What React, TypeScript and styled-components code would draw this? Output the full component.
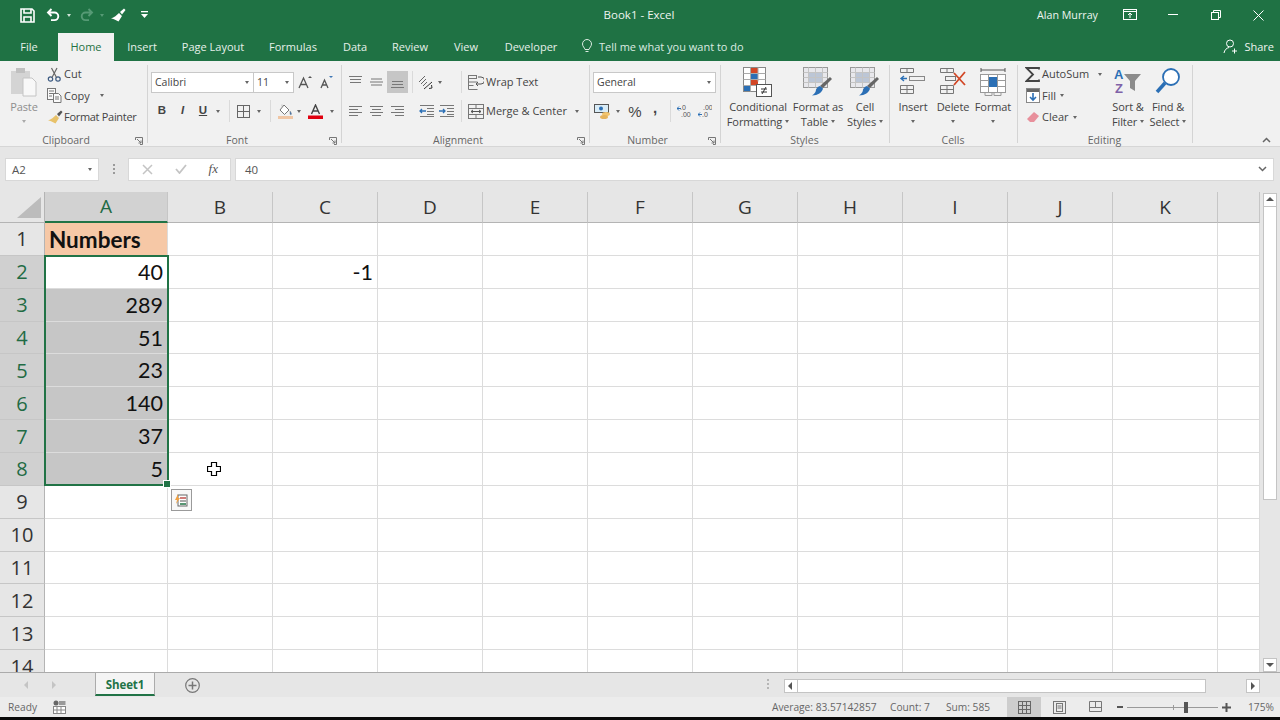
import React from 'react';
import styled, { createGlobalStyle } from 'styled-components';

const Global = createGlobalStyle`
  html, body { margin: 0; padding: 0; background: #e6e6e6; }
  body { font-family: "Open Sans", "Noto Sans", sans-serif; }
  svg { display: block; flex-shrink: 0; }
`;
const Win = styled.div`
  width: 1280px; height: 720px; overflow: hidden; display: flex; flex-direction: column;
  background: #e6e6e6; position: relative;
`;
const TitleBar = styled.div`
  height: 30px; flex: none; background: #1f7244; color: #fff; display: grid;
  grid-template-columns: 1fr auto 1fr; align-items: center;
`;
const Quick = styled.div`display: flex; align-items: center; padding-left: 10px;`;
const Slot = styled.div<{ $w: number; $active?: boolean }>`
  width: ${p => p.$w}px; height: 22px; flex: none; display: flex; align-items: center; justify-content: center;
  background: ${p => (p.$active ? '#c6c6c6' : 'transparent')};
`;
const Caret = styled.span<{ $c?: string }>`
  display: block; width: 0; height: 0; flex: none;
  border-left: 2.5px solid transparent; border-right: 2.5px solid transparent;
  border-top: 3px solid ${p => p.$c ?? '#666'};
`;
const TitleText = styled.div`font-size: 11.5px; color: #eef5f0; margin-top: -1px; margin-left: -2px;`;
const TitleRight = styled.div`display: flex; align-items: center; justify-content: flex-end; font-size: 10.7px;`;
const UserName = styled.span`width: 62px; margin-right: 9px; white-space: nowrap; color: #eef5f0; margin-top: -1px;`;
const WinBtn = styled.div`width: 43px; display: flex; justify-content: center;`;

const TabBar = styled.div`
  height: 31px; flex: none; background: #1f7244; display: flex; align-items: flex-end; font-size: 11px; color: #e6f0ea;
`;
const Tab = styled.div<{ $w: number; $on?: boolean }>`
  width: ${p => p.$w}px; height: 28px; display: flex; align-items: center; justify-content: center;
  padding-bottom: 2px; box-sizing: border-box;
  background: ${p => (p.$on ? '#f1f1f1' : 'transparent')}; color: ${p => (p.$on ? '#1f7244' : '#e6f0ea')};
`;
const TellMe = styled.div`
  height: 28px; display: flex; align-items: center; gap: 6px; margin-left: 11px; padding-bottom: 2px; box-sizing: border-box; color: #dcebe2;
`;
const Share = styled.div`
  margin-left: auto; height: 28px; display: flex; align-items: center; gap: 6px; padding: 0 6px 2px 0; box-sizing: border-box; color: #eef5f0;
`;

const Ribbon = styled.div`
  height: 86px; flex: none; background: #f1f1f1; border-bottom: 1px solid #d6d6d6; box-sizing: border-box;
  display: flex; align-items: flex-start; font-size: 11px; color: #444; position: relative;
`;
const Group = styled.div<{ $w: number }>`
  width: ${p => p.$w}px; height: 78px; margin-top: 4px; flex: none; box-sizing: border-box;
  border-right: 1px solid #d4d4d4; display: flex; flex-direction: column; padding-top: 6px;
`;
const Body = styled.div<{ $pl?: number }>`
  height: 60px; flex: none; display: flex; padding-left: ${p => p.$pl ?? 0}px; box-sizing: border-box;
`;
const Stack = styled.div<{ $pl?: number }>`
  height: 60px; flex: none; display: flex; flex-direction: column; gap: 7px; padding-left: ${p => p.$pl ?? 0}px;
`;
const Row = styled.div<{ $ml?: number }>`
  display: flex; align-items: center; height: 22px; white-space: nowrap; margin-left: ${p => p.$ml ?? 0}px;
`;
const GroupLabel = styled.div<{ $pr?: number }>`
  height: 18px; line-height: 18px; text-align: center; font-size: 10.5px; color: #666; position: relative;
  padding-right: ${p => p.$pr ?? 1}px;
`;
const Launcher = styled.span`position: absolute; right: 4px; top: 6px;`;
const Combo = styled.div<{ $w: number }>`
  width: ${p => p.$w}px; height: 21px; flex: none; box-sizing: border-box; background: #fff; border: 1px solid #c8c8c8;
  display: flex; align-items: center; justify-content: space-between; padding: 0 4px 0 3px; font-size: 10.5px; color: #444; margin-left: -1px;
`;
const Sep = styled.div`width: 1px; height: 22px; background: #dadada;`;
const Large = styled.div<{ $w: number; $dim?: boolean }>`
  width: ${p => p.$w}px; flex: none; display: flex; flex-direction: column; align-items: center; margin-top: -4px;
  color: ${p => (p.$dim ? '#8e8e8e' : '#444')};
`;
const LargeIcon = styled.div`height: 32px; display: flex; align-items: flex-start; justify-content: center;`;
const Line = styled.div`
  height: 15px; line-height: 15px; white-space: nowrap; display: flex; align-items: center; justify-content: center; gap: 3px; letter-spacing: -0.1px;
`;
const SmallCol = styled.div<{ $w: number; $pl?: number }>`
  width: ${p => p.$w}px; flex: none; display: flex; flex-direction: column; margin-top: -7.5px; padding-left: ${p => p.$pl ?? 0}px; box-sizing: border-box;
`;
const SmallRow = styled.div`height: 21.5px; display: flex; align-items: center; white-space: nowrap;`;
const SmallIcon = styled.span`width: 17px; margin-right: 1px; display: flex; justify-content: center; flex: none;`;
const SmallText = styled.span<{ $w?: number; $tight?: boolean }>`
  display: inline-block; margin-bottom: 1px; ${p => (p.$w ? `width:${p.$w}px;` : 'margin-right: 4px;')}
  letter-spacing: ${p => (p.$tight ? '-0.3px' : '0')};
`;
const CollapseBtn = styled.span`position: absolute; right: 9px; bottom: 3px;`;

const FormulaRow = styled.div`
  height: 45px; flex: none; display: flex; align-items: center; background: #e6e6e6; padding-bottom: 1px; box-sizing: border-box;
  font-size: 11.5px; color: #555;
`;
const FBox = styled.div<{ $w?: number; $ml: number }>`
  ${p => (p.$w ? `width:${p.$w}px; flex:none;` : 'flex:1;')} margin-left: ${p => p.$ml}px; height: 23px; box-sizing: border-box;
  background: #fff; border: 1px solid #d8d8d8; display: flex; align-items: center; justify-content: space-between; padding: 0 6px;
`;
const FormulaEnd = styled.div`width: 6px; flex: none;`;
const Dots = styled.span`
  width: 2px; height: 10px; margin-left: 14px; flex:none;
  background: repeating-linear-gradient(#9a9a9a 0 2px, transparent 2px 4px);
`;
const FxSlot = styled.span<{ $ml?: number; $mr?: number }>`
  display: flex; margin-left: ${p => p.$ml ?? 0}px; margin-right: ${p => p.$mr ?? 0}px;
`;

const Main = styled.div`height: 480px; flex: none; display: flex; background: #e6e6e6;`;
const SheetWrap = styled.div`width: 1260px; height: 480px; flex: none; position: relative; overflow: hidden; background: #fff;`;
const Grid = styled.div`
  display: grid; grid-template-columns: 45px 123px repeat(10, 105px) 42px; grid-auto-rows: 32.86px; grid-template-rows: 31px;
`;
const Corner = styled.div`
  background: #e6e6e6; border-right: 1px solid #b4b4b4; border-bottom: 1px solid #b4b4b4; display: flex; align-items: flex-end; justify-content: flex-end; padding: 0 3px 4px 0;
`;
const ColHead = styled.div<{ $on?: boolean }>`
  background: ${p => (p.$on ? '#d2d2d2' : '#e6e6e6')}; color: ${p => (p.$on ? '#1f6b44' : '#333')};
  border-right: 1px solid #c6c6c6; border-bottom: ${p => (p.$on ? '2px solid #217346' : '1px solid #b4b4b4')};
  display: flex; align-items: center; justify-content: center; font-size: 19px; box-sizing: border-box; padding-bottom: 1px;
`;
const RowHead = styled.div<{ $on?: boolean }>`
  background: ${p => (p.$on ? '#d0d0d0' : '#e6e6e6')}; color: ${p => (p.$on ? '#1f6b44' : '#333')};
  border-right: 1px solid #b4b4b4; border-bottom: 1px solid #c6c6c6; box-sizing: border-box;
  display: flex; align-items: center; justify-content: center; font-size: 20px;
`;
const Cell = styled.div<{ $bg?: string; $bold?: boolean; $left?: boolean }>`
  background: ${p => p.$bg ?? '#fff'}; border-right: 1px solid #dcdcdc; border-bottom: 1px solid #dcdcdc; box-sizing: border-box;
  display: flex; align-items: center; justify-content: ${p => (p.$left ? 'flex-start' : 'flex-end')};
  padding: ${p => (p.$bold ? '1px 4px 0' : '0 4px')}; font-family: Lato, "Open Sans", sans-serif; color: #111;
  font-size: ${p => (p.$bold ? 22.5 : 21.5)}px; font-weight: ${p => (p.$bold ? 700 : 400)};
`;
const Selection = styled.div`
  position: absolute; left: 44px; top: 63px; width: 125px; height: 231px; box-sizing: border-box; border: 2px solid #217346; pointer-events: none;
`;
const Handle = styled.div`
  position: absolute; right: -4px; bottom: -4px; width: 6px; height: 6px; background: #217346; border: 1px solid #fff;
`;
const QuickAnalysis = styled.div`
  position: absolute; left: 171px; top: 297px; width: 21px; height: 22px; box-sizing: border-box; border: 1px solid #9a9a9a; background: #f8f8f8;
  display: flex; align-items: center; justify-content: center;
`;
const Pointer = styled.div`position: absolute; left: 207px; top: 270px;`;
const VScroll = styled.div`
  width: 14px; height: 480px; margin-left: 3px; flex: none; display: flex; flex-direction: column; padding-top: 1px; box-sizing: border-box;
`;
const ScrollBtn = styled.div<{ $w?: number; $h?: number }>`
  width: ${p => p.$w ?? 14}px; height: ${p => p.$h ?? 14}px; flex: none; background: #fff; border: 1px solid #c4c4c4; box-sizing: border-box;
  display: flex; align-items: center; justify-content: center;
`;
const VThumb = styled.div`height: 293px; flex: none; background: #fff; border: 1px solid #c4c4c4; border-top: none; box-sizing: border-box;`;
const Track = styled.div`flex: 1;`;
const SheetBar = styled.div`
  height: 25px; flex: none; background: #e6e6e6; border-top: 1px solid #ababab; box-sizing: border-box; display: flex; align-items: flex-start; position: relative;
`;
const NavArrows = styled.div`width: 95px; height: 24px; flex: none; display: flex; align-items: center; padding-left: 23px; gap: 19px; box-sizing: border-box;`;
const SheetTab = styled.div`
  width: 60px; height: 23px; flex: none; box-sizing: border-box; padding-top: 2px; background: #f4f4f4; border-left: 1px solid #ababab; border-right: 1px solid #ababab; border-bottom: 2px solid #217346;
  color: #217346; font-weight: 700; font-size: 11.5px; display: flex; align-items: center; justify-content: center; letter-spacing: -0.1px;
`;
const AddSheet = styled.div`margin-left: 30px; height: 24px; display: flex; align-items: center;`;
const BarDots = styled.div`
  margin-left: auto; width: 2px; height: 10px; margin-top: 6px; flex: none;
  background: repeating-linear-gradient(#b5b5b5 0 2px, transparent 2px 4px);
`;
const HScroll = styled.div`
  width: 476px; height: 14px; margin: 6px 20px 0 15px; flex: none; display: flex;
`;
const HThumb = styled.div`width: 408px; height: 14px; background: #fff; border: 1px solid #c4c4c4; border-left: none; box-sizing: border-box; flex: none;`;
const Status = styled.div`
  height: 20px; flex: none; background: #ececec; display: flex; align-items: center; font-size: 10.2px; color: #666; box-sizing: border-box;
`;
const Ready = styled.span`margin-left: 8px; width: 45px; flex: none;`;
const StatusItem = styled.span<{ $w: number }>`width: ${p => p.$w}px; flex: none; white-space: nowrap;`;
const StatusPush = styled.div`flex: 1;`;
const ViewBtn = styled.div<{ $w: number; $on?: boolean }>`
  width: ${p => p.$w}px; height: 20px; flex: none; display: flex; align-items: center; justify-content: center; background: ${p => (p.$on ? '#cdcdcd' : 'transparent')};
`;
const Zoomer = styled.div`width: 114px; flex: none; margin-left: 4px; height: 19px; display: flex; align-items: center; justify-content: space-between; position: relative;`;
const ZoomTrack = styled.div`
  flex: 1; height: 1px; background: #9a9a9a; margin: 0 4px; position: relative;
  &::after { content: ''; position: absolute; left: 46px; top: -2px; width: 1px; height: 5px; background: #9a9a9a; }
`;
const ZoomThumb = styled.div`position: absolute; left: 57px; top: -5px; width: 4px; height: 11px; background: #555;`;
const ZoomText = styled.span`width: 24px; margin-left: 17px; margin-right: 8px; flex: none; white-space: nowrap; font-size: 10.2px;`;
const Black = styled.div`flex: 1; background: #0a0a0a;`;

const Launch = () => (
  <svg width="8" height="8" viewBox="0 0 8 8" fill="none" stroke="#777"><path d="M.5 3V.5H7.5V7.5H5" /><path d="M2 2l4 4M6 3.5V6H3.5" /></svg>
);
const Save = () => (
  <svg width="15" height="15" viewBox="0 0 15 15" fill="none" stroke="#fff" strokeWidth="1.6"><path d="M1 1h11l2 2v11H1z" /><path d="M4 1v4h7V1M4 14V9h7v5" /></svg>
);
const Undo = ({ c = '#fff' }: { c?: string }) => (
  <svg width="14" height="14" viewBox="0 0 14 14" fill="none" stroke={c} strokeWidth="1.9"><path d="M5.5 1L2 4.5 5.5 8M2 4.5h6.5a3.8 3.8 0 0 1 0 7.6H5" /></svg>
);
const Brush = ({ c = '#fff', h = '#fff' }: { c?: string; h?: string }) => (
  <svg width="16" height="14" viewBox="0 0 16 14"><path d="M9 5l3 3-3.5 5.5C6 12 3 10.5 1 10.5 4 9.5 7 7 9 5z" fill={c} /><path d="M10 4l4-3.5 1.5 1.5-3.5 4.5z" fill={h} /></svg>
);
const Customize = () => (
  <svg width="7" height="8" viewBox="0 0 7 8" fill="#fff"><rect y="0" width="7" height="1.3" /><path d="M0 3h7L3.5 7z" /></svg>
);
const Display = () => (
  <svg width="14" height="12" viewBox="0 0 14 12" fill="none" stroke="#fff"><rect x=".5" y=".5" width="13" height="10" /><path d="M.5 2.5h13M7 9V4M5 6l2-2 2 2" /></svg>
);
const Min = () => <svg width="10" height="2" viewBox="0 0 10 2"><rect width="10" height="1" fill="#fff" /></svg>;
const Restore = () => (
  <svg width="10" height="10" viewBox="0 0 10 10" fill="none" stroke="#fff"><rect x=".5" y="2.5" width="7" height="7" /><path d="M2.5 2.5v-2h7v7h-2" /></svg>
);
const Close = () => <svg width="11" height="11" viewBox="0 0 11 11" stroke="#fff"><path d="M.5.5l10 10M10.5.5l-10 10" /></svg>;
const Bulb = () => (
  <svg width="12" height="15" viewBox="0 0 12 15" fill="none" stroke="#dcebe2"><path d="M4 10.5C3.5 8.5 1.5 7.5 1.5 5a4.5 4.5 0 0 1 9 0C10.5 7.5 8.5 8.5 8 10.5z" /><path d="M4.5 12.5h3" /></svg>
);
const Person = () => (
  <svg width="15" height="15" viewBox="0 0 15 15" fill="none" stroke="#fff"><circle cx="7" cy="4.5" r="3.5" /><path d="M1 14c.5-3 2.5-5 5-5.500M11.500 9.500v5M9 12h5" /></svg>
);
const PasteIcon = () => (
  <svg width="28" height="30" viewBox="0 0 28 30"><rect x="1" y="4" width="19" height="23" fill="#d4d4d4" /><rect x="6" y="1" width="9" height="5" fill="#c0c0c0" /><path d="M13 11h9l4 4v14H13z" fill="#f8f8f8" stroke="#c4c4c4" /></svg>
);
const Scissors = () => (
  <svg width="15" height="15" viewBox="0 0 15 15" fill="none" stroke="#3c5a82" strokeWidth="1.2"><circle cx="3.5" cy="12" r="2.2" /><circle cx="11" cy="12" r="2.2" /><path d="M5 10.5L10 1M9.5 10.5L4.5 1" stroke="#666" /></svg>
);
const CopyIcon = () => (
  <svg width="15" height="15" viewBox="0 0 15 15" fill="#fafafa" stroke="#777"><rect x=".5" y=".5" width="8" height="11" /><path d="M2 3h5M2 5.5h5M2 8h3" /><path d="M6.5 5.5h5L14 8v6.5H6.500z" /><path d="M8 9h4M8 11h4" /></svg>
);
const BoldL = styled.span<{ $b?: boolean; $i?: boolean; $u?: boolean; $s?: number; $light?: boolean; $mb?: number }>`
  font-weight: ${p => (p.$light ? 400 : p.$b ? 700 : 600)}; font-style: ${p => (p.$i ? 'italic' : 'normal')};
  text-decoration: ${p => (p.$u ? 'underline' : 'none')}; font-size: ${p => p.$s ?? 11.5}px; color: #444; line-height: 1;
  font-family: "Liberation Sans", sans-serif; margin-bottom: ${p => p.$mb ?? 0}px;
`;
const GrowA = ({ up }: { up: boolean }) => (
  <svg width="15" height="15" viewBox="0 0 15 15"><path d={up ? 'M1 13L5.5 3 10 13M3 9.5h5' : 'M2 13L5.5 5 9 13M3.5 10h4'} fill="none" stroke="#555" strokeWidth="1.3" /><path d={up ? 'M10 3l2-2 2 2z' : 'M10 1h4l-2 2z'} fill={up ? '#555' : '#3f77b5'} /></svg>
);
const Borders = () => (
  <svg width="13" height="13" viewBox="0 0 13 13" fill="none" stroke="#666"><rect x=".5" y=".5" width="12" height="12" /><path d="M6.5.5v12M.5 6.5h12" /></svg>
);
const Fill = () => (
  <svg width="17" height="15" viewBox="0 0 17 15"><path d="M7 1l5 5-4.500 4.500L3 6z" fill="#fff" stroke="#777" /><path d="M5 2.500v-2M13 7c1 1.500 1.500 2 1.500 3s-1.500 1-1.500 0z" fill="#3f77b5" stroke="#777" strokeWidth=".4" /><rect x="1" y="12" width="15" height="3" fill="#f0c6a4" /></svg>
);
const FontColor = () => (
  <svg width="15" height="15" viewBox="0 0 15 15"><path d="M3.5 10L7.5 1l4 9M5 7h5" fill="none" stroke="#444" strokeWidth="1.4" /><rect y="11.5" width="15" height="3.5" fill="#e0000f" /></svg>
);
const Lines = ({ kind }: { kind: string }) => {
  const d: Record<string, string> = {
    top: 'M1 1.5h13M2 4.5h11M2 7.5h11',
    mid: 'M2 4h11M1 7h13M2 10h11',
    bot: 'M2 6.5h11M2 9.5h11M1 12.5h13',
    left: 'M1 2.5h13M1 5.5h9M1 8.5h13M1 11.5h9',
    center: 'M1 2.5h13M3 5.5h9M1 8.5h13M3 11.5h9',
    right: 'M1 2.5h13M5 5.5h9M1 8.5h13M5 11.5h9',
  };
  return <svg width="15" height="14" viewBox="0 0 15 14" fill="none" stroke="#777"><path d={d[kind]} /></svg>;
};
const Orient = () => (
  <svg width="16" height="15" viewBox="0 0 16 15" fill="none" stroke="#666"><path d="M1 7l6-6M3 9l5-5M5 11l4-4" /><path d="M6 14l8-7" stroke="#333" /><path d="M11 13.5l3-.5-.5-3" stroke="#333" /></svg>
);
const Indent = ({ inc }: { inc?: boolean }) => (
  <svg width="15" height="12" viewBox="0 0 15 12" fill="none" stroke="#777"><path d="M1 .5h14M8 3.5h7M8 6.5h7M8 9.5h7M1 11.5h14" /><path d={inc ? 'M0 6h6M4 4l2 2-2 2' : 'M1 6h6M3 4L1 6l2 2'} stroke="#2b6fb5" strokeWidth="1.3" /></svg>
);
const Wrap = () => (
  <svg width="16" height="15" viewBox="0 0 16 15" fill="none" stroke="#777"><rect x=".5" y=".5" width="8" height="3" /><path d="M.5 3.5v11h9M.5 7h9M.5 10.5h5" /><path d="M10 2h3a2 2 0 0 1 0 7H9" stroke="#555" /><path d="M10 7l-2 2 2 2" stroke="#555" /></svg>
);
const Merge = () => (
  <svg width="16" height="15" viewBox="0 0 16 15" fill="none" stroke="#777"><rect x=".5" y=".5" width="15" height="14" /><path d="M.5 4.5h15M.5 10.5h15M8 .5v4M8 10.5v4" /><path d="M3 7.5h10M5 6L3 7.5 5 9M11 6l2 1.5L11 9" stroke="#555" /></svg>
);
const Currency = () => (
  <svg width="18" height="16" viewBox="0 0 18 16"><rect x=".5" y="1.5" width="14" height="8" fill="#d9ecf7" stroke="#555" /><circle cx="7" cy="5.5" r="2" fill="#2b6fb5" /><ellipse cx="12" cy="11" rx="4" ry="2" fill="#f2c46d" /><ellipse cx="10" cy="14" rx="4" ry="2" fill="#e5b35c" /></svg>
);
const DecIcon = ({ inc }: { inc?: boolean }) => (
  <svg width="14" height="14" viewBox="0 0 14 14"><text x={inc ? 5 : 3} y="6" fontSize="7" fill="#555" fontFamily="Liberation Sans">{inc ? '.00' : '.0'}</text><text x="4" y="13" fontSize="7" fill="#555" fontFamily="Liberation Sans">{inc ? '.0' : '.00'}</text><path d="M0 4.5h4M2 2.5l-2 2 2 2" fill="none" stroke="#2b6fb5" transform={inc ? 'translate(0 6)' : ''} /></svg>
);
const CondFormat = () => (
  <svg width="30" height="30" viewBox="0 0 30 30"><rect x=".5" y=".5" width="22" height="24" fill="#fff" stroke="#888" /><rect x="7" y="1" width="8" height="5" fill="#d24726" /><rect x="7" y="7" width="8" height="5" fill="#2b6fb5" /><rect x="7" y="13" width="8" height="5" fill="#d24726" /><rect x="1" y="19" width="7" height="5" fill="#2b6fb5" /><path d="M7.5.5v24M15 .5v14M.5 6.5h22M.5 12.5h22M.5 18.5h14" stroke="#aaa" fill="none" /><rect x="13.5" y="17.5" width="15" height="12" fill="#fff" stroke="#555" /><path d="M18 22h6M18 25h6M23 20l-4 7" stroke="#333" fill="none" /></svg>
);
const TableBrush = () => (
  <svg width="30" height="30" viewBox="0 0 30 30"><rect x=".5" y=".5" width="24" height="20" fill="#e8e8ec" stroke="#999" /><rect x="5" y="6" width="15" height="10" fill="#bcc6d6" /><path d="M.5 5.5h24M.5 10.5h24M.5 15.5h24M5.5.5v20M12.5.5v20M19.5.5v20" stroke="#c4c4c4" fill="none" /><path d="M27 10l2 2-9 9-3-2z" fill="#666" /><path d="M17 19l3 2.5c-1 4-5 7-11 7 3-2 4-4 4-6 1-2 2-3 4-3.500z" fill="#2b6fb5" /></svg>
);
const Cells = ({ kind }: { kind: string }) => (
  <svg width="28" height="28" viewBox="0 0 28 28" fill="none" stroke="#777">
    <path d="M1.5 1.5h13v4h-13zM8 1.5v4M1.5 18.5h13v8h-13zM1.5 22.5h13M8 18.5v8" />
    {kind === 'ins' ? (
      <>
        <rect x="10.5" y="9.5" width="15" height="4" stroke="#888" />
        <path d="M2 11.5h6M5 9l-3 2.5L5 14" stroke="#2b6fb5" strokeWidth="1.4" />
      </>
    ) : (
      <>
        <rect x="6.5" y="9.5" width="10" height="4" />
        <path d="M15 6l11 12M26 5L15 18" stroke="#d24726" strokeWidth="1.8" />
      </>
    )}
  </svg>
);
const FormatCells = () => (
  <svg width="28" height="30" viewBox="0 0 28 30" fill="none" stroke="#999"><path d="M2 3h24M2 1v4M26 1v4" stroke="#555" /><rect x="1.5" y="7.5" width="25" height="18" fill="#fff" /><path d="M1.5 13.5h25M1.5 19.5h25M9.5 7.5v18M18.5 7.5v18" /><rect x="10" y="10" width="8" height="10" fill="#2b6fb5" stroke="none" /><path d="M6 25.5v3h7v-3M15 25.5v3h7v-3" /></svg>
);
const Sigma = () => (
  <svg width="15" height="15" viewBox="0 0 15 15" fill="none" stroke="#444" strokeWidth="1.8"><path d="M14 2.5V1H1.5L8 7.5 1.5 14H14v-1.500" /></svg>
);
const FillDown = () => (
  <svg width="14" height="15" viewBox="0 0 14 15"><rect x=".5" y=".5" width="13" height="14" fill="#fff" stroke="#888" /><rect x="1" y="1" width="12" height="3" fill="#666" /><path d="M7 5v7M4 9l3 3 3-3" fill="none" stroke="#2b6fb5" strokeWidth="1.6" /></svg>
);
const Eraser = () => (
  <svg width="14" height="13" viewBox="0 0 14 13"><path d="M8 1l5 4-5 6H4L1 8z" fill="#e8909c" /></svg>
);
const SortIcon = () => (
  <svg width="28" height="28" viewBox="0 0 28 28"><text x="0" y="12" fontFamily="Liberation Sans" fontSize="13" fontWeight="700" fill="#2b6fb5">A</text><text x="1" y="26" fontFamily="Liberation Sans" fontSize="13" fontWeight="700" fill="#7f62a8">Z</text><path d="M10 7h17l-6 7v10l-5-3v-7z" fill="#8c8c8c" /></svg>
);
const FindIcon = () => (
  <svg width="27" height="27" viewBox="0 0 27 27" fill="none"><circle cx="16" cy="10" r="8" stroke="#2b6fb5" strokeWidth="1.8" fill="#fff" /><path d="M10 16L2 25" stroke="#2b6fb5" strokeWidth="3.5" /></svg>
);
const ChevUp = () => <svg width="9" height="6" viewBox="0 0 9 6" fill="none" stroke="#666" strokeWidth="1.5"><path d="M1 5l3.5-3.5L8 5" /></svg>;
const ChevDown = () => <svg width="9" height="6" viewBox="0 0 9 6" fill="none" stroke="#666" strokeWidth="1.5"><path d="M1 1l3.5 3.5L8 1" /></svg>;
const XIcon = () => <svg width="11" height="11" viewBox="0 0 11 11" stroke="#c4c4c4" strokeWidth="1.5"><path d="M1 1l9 9M10 1l-9 9" /></svg>;
const CheckIcon = () => <svg width="12" height="10" viewBox="0 0 12 10" fill="none" stroke="#c4c4c4" strokeWidth="1.8"><path d="M1 5l3.5 4L11 1" /></svg>;
const FxText = styled.span`font-family: "Liberation Serif", serif; font-style: italic; font-size: 13px; color: #555; margin-right: 6px;`;
const CornerTri = () => <svg width="24" height="21" viewBox="0 0 24 21"><path d="M24 0v21H0z" fill="#bcbcbc" /></svg>;
const QA = () => (
  <svg width="13" height="13" viewBox="0 0 13 13"><rect x="3" y="1" width="9" height="11" fill="#fff" stroke="#666" /><path d="M5 4h6" stroke="#c0504d" strokeWidth="1.5" /><path d="M5 7h6" stroke="#555" /><path d="M5 10h6" stroke="#217346" strokeWidth="1.5" /><path d="M3 0L0 6h2L1 10l4-6H3z" fill="#f0a040" /></svg>
);
const CrossCursor = () => (
  <svg width="14" height="14" viewBox="0 0 14 14"><path d="M4.5.5h5v4h4v5h-4v4h-5v-4h-4v-5h4z" fill="#fff" stroke="#000" strokeWidth="1.2" /></svg>
);
const Tri = ({ dir, c = '#555' }: { dir: 'u' | 'd' | 'l' | 'r'; c?: string }) => {
  const d = { u: 'M0 5L4 1l4 4z', d: 'M0 2h8L4 6z', l: 'M5 0v8L1 4z', r: 'M2 0v8l4-4z' }[dir];
  return <svg width="8" height="8" viewBox="0 0 8 8"><path d={d} fill={c} /></svg>;
};
const Plus = () => (
  <svg width="15" height="15" viewBox="0 0 15 15" fill="none" stroke="#777"><circle cx="7.5" cy="7.5" r="6.8" strokeWidth="1.2" /><path d="M7.5 3.5v8M3.5 7.5h8" strokeWidth="1.5" /></svg>
);
const Macro = () => (
  <svg width="13" height="14" viewBox="0 0 13 14"><circle cx="3" cy="3" r="2.5" fill="#666" /><rect x=".5" y="6.5" width="12" height="7" fill="#fff" stroke="#888" /><rect x="6" y="1" width="6.5" height="4" fill="#999" /><path d="M4 6.5v7M8 6.5v7M.5 10h12" stroke="#888" /></svg>
);
const ViewNormal = () => <svg width="13" height="13" viewBox="0 0 13 13" fill="none" stroke="#666"><rect x=".5" y=".5" width="12" height="12" /><path d="M4.5.5v12M8.5.5v12M.5 4.5h12M.5 8.5h12" /></svg>;
const ViewPage = () => <svg width="13" height="13" viewBox="0 0 13 13" fill="none" stroke="#777"><rect x=".5" y=".5" width="12" height="12" /><rect x="3.5" y="2.5" width="6" height="8" /><path d="M4.5 5h4M4.5 7h4" /></svg>;
const ViewBreak = () => <svg width="13" height="13" viewBox="0 0 13 13" fill="none" stroke="#777"><path d="M.5 10.5V.5h12v10zM6.5.5v6M.5 6.5h12" /></svg>;
const ZoomMinus = () => <svg width="6" height="6" viewBox="0 0 6 6"><rect y="2" width="6" height="2" fill="#555" /></svg>;
const ZoomPlus = () => <svg width="9" height="9" viewBox="0 0 9 9"><path d="M0 3.5h9v2H0zM3.5 0h2v9h-2z" fill="#555" /></svg>;

const COLS = ['A', 'B', 'C', 'D', 'E', 'F', 'G', 'H', 'I', 'J', 'K', ''];
const VALUES: Record<number, string> = { 2: '40', 3: '289', 4: '51', 5: '23', 6: '140', 7: '37', 8: '5' };
const ROWS = Array.from({ length: 14 }, (_, i) => i + 1);

const Sheet = () => (
  <Grid>
    <Corner><CornerTri /></Corner>
    {COLS.map((c, i) => <ColHead key={i} $on={c === 'A'}>{c}</ColHead>)}
    {ROWS.map(r => (
      <React.Fragment key={r}>
        <RowHead $on={r >= 2 && r <= 8}>{r}</RowHead>
        {COLS.map((c, i) => {
          if (c === 'A' && r === 1) return <Cell key={i} $bg="#f6c8a6" $bold $left>Numbers</Cell>;
          if (c === 'A' && VALUES[r]) return <Cell key={i} $bg={r === 2 ? '#fff' : '#c6c6c6'}>{VALUES[r]}</Cell>;
          if (c === 'C' && r === 2) return <Cell key={i}>-1</Cell>;
          return <Cell key={i} />;
        })}
      </React.Fragment>
    ))}
  </Grid>
);

export default function App() {
  return (
    <Win>
      <Global />
      <TitleBar>
        <Quick>
          <Slot $w={34}><Save /></Slot>
          <Slot $w={18}><Undo /></Slot>
          <Slot $w={14}><Caret $c="#cfe3d7" /></Slot>
          <Slot $w={22}><svg width="14" height="14" viewBox="0 0 14 14" style={{ transform: 'scaleX(-1)' }}><path d="M5.5 1L2 4.5 5.5 8M2 4.5h6.5a3.8 3.8 0 0 1 0 7.6H5" fill="none" stroke="#569a75" strokeWidth="1.9" /></svg></Slot>
          <Slot $w={8}><Caret $c="#569a75" /></Slot>
          <Slot $w={23}><Brush /></Slot>
          <Slot $w={30}><Customize /></Slot>
        </Quick>
        <TitleText>Book1 - Excel</TitleText>
        <TitleRight>
          <UserName>Alan Murray</UserName>
          <WinBtn><Display /></WinBtn>
          <WinBtn><Min /></WinBtn>
          <WinBtn><Restore /></WinBtn>
          <WinBtn><Close /></WinBtn>
        </TitleRight>
      </TitleBar>
      <TabBar>
        <Tab $w={58}>File</Tab>
        <Tab $w={56} $on>Home</Tab>
        <Tab $w={56}>Insert</Tab>
        <Tab $w={86}>Page Layout</Tab>
        <Tab $w={74}>Formulas</Tab>
        <Tab $w={50}>Data</Tab>
        <Tab $w={60}>Review</Tab>
        <Tab $w={52}>View</Tab>
        <Tab $w={78}>Developer</Tab>
        <TellMe><Bulb />Tell me what you want to do</TellMe>
        <Share><Person />Share</Share>
      </TabBar>
      <Ribbon>
        <Group $w={148}>
          <Body $pl={8}>
            <Large $w={32} $dim>
              <LargeIcon><PasteIcon /></LargeIcon>
              <Line>Paste</Line>
              <Line><Caret $c="#aaa" /></Line>
            </Large>
            <SmallCol $w={100} $pl={6}>
              <SmallRow><SmallIcon><Scissors /></SmallIcon><SmallText>Cut</SmallText></SmallRow>
              <SmallRow><SmallIcon><CopyIcon /></SmallIcon><SmallText $w={36}>Copy</SmallText><Caret /></SmallRow>
              <SmallRow><SmallIcon><Brush c="#e8c26a" h="#555" /></SmallIcon><SmallText $tight>Format Painter</SmallText></SmallRow>
            </SmallCol>
          </Body>
          <GroupLabel $pr={15}>Clipboard<Launcher><Launch /></Launcher></GroupLabel>
        </Group>
        <Group $w={194}>
          <Stack $pl={4}>
            <Row>
              <Combo $w={103}>Calibri<Caret /></Combo>
              <Combo $w={41}>11<Caret /></Combo>
              <Slot $w={22}><GrowA up /></Slot>
              <Slot $w={20}><GrowA up={false} /></Slot>
            </Row>
            <Row>
              <Slot $w={20}><BoldL $b>B</BoldL></Slot>
              <Slot $w={21}><BoldL $i>I</BoldL></Slot>
              <Slot $w={20}><BoldL $u>U</BoldL></Slot>
              <Slot $w={10}><Caret /></Slot>
              <Slot $w={12}><Sep /></Slot>
              <Slot $w={16}><Borders /></Slot>
              <Slot $w={16}><Caret /></Slot>
              <Slot $w={6}><Sep /></Slot>
              <Slot $w={24}><Fill /></Slot>
              <Slot $w={4}><Caret /></Slot>
              <Slot $w={28}><FontColor /></Slot>
              <Slot $w={6}><Caret /></Slot>
            </Row>
          </Stack>
          <GroupLabel $pr={15}>Font<Launcher><Launch /></Launcher></GroupLabel>
        </Group>
        <Group $w={248}>
          <Stack $pl={3}>
            <Row>
              <Slot $w={21}><Lines kind="top" /></Slot>
              <Slot $w={21}><Lines kind="mid" /></Slot>
              <Slot $w={21} $active><Lines kind="bot" /></Slot>
              <Slot $w={8}><Sep /></Slot>
              <Slot $w={20}><Orient /></Slot>
              <Slot $w={8}><Caret /></Slot>
              <Slot $w={13} />
              <Slot $w={8}><Sep /></Slot>
              <Slot $w={21}><Wrap /></Slot>
              <SmallText>Wrap Text</SmallText>
            </Row>
            <Row>
              <Slot $w={21}><Lines kind="left" /></Slot>
              <Slot $w={21}><Lines kind="center" /></Slot>
              <Slot $w={21}><Lines kind="right" /></Slot>
              <Slot $w={8} />
              <Slot $w={20}><Indent /></Slot>
              <Slot $w={20}><Indent inc /></Slot>
              <Slot $w={1} />
              <Slot $w={8}><Sep /></Slot>
              <Slot $w={21}><Merge /></Slot>
              <SmallText $w={83}>Merge &amp; Center</SmallText>
              <Slot $w={15}><Caret /></Slot>
            </Row>
          </Stack>
          <GroupLabel $pr={15}>Alignment<Launcher><Launch /></Launcher></GroupLabel>
        </Group>
        <Group $w={131}>
          <Stack $pl={4}>
            <Row><Combo $w={123}>General<Caret /></Combo></Row>
            <Row $ml={-1}>
              <Slot $w={20}><Currency /></Slot>
              <Slot $w={10}><Caret /></Slot>
              <Slot $w={24}><BoldL $s={15} $light>%</BoldL></Slot>
              <Slot $w={16}><BoldL $b $s={15} $mb={7}>,</BoldL></Slot>
              <Slot $w={14}><Sep /></Slot>
              <Slot $w={14}><DecIcon /></Slot>
              <Slot $w={28}><DecIcon inc /></Slot>
            </Row>
          </Stack>
          <GroupLabel $pr={15}>Number<Launcher><Launch /></Launcher></GroupLabel>
        </Group>
        <Group $w={169}>
          <Body $pl={2}>
            <Large $w={70}>
              <LargeIcon><CondFormat /></LargeIcon>
              <Line>Conditional</Line>
              <Line>Formatting<Caret /></Line>
            </Large>
            <Large $w={50}>
              <LargeIcon><TableBrush /></LargeIcon>
              <Line>Format as</Line>
              <Line>Table<Caret /></Line>
            </Large>
            <Large $w={44}>
              <LargeIcon><TableBrush /></LargeIcon>
              <Line>Cell</Line>
              <Line>Styles<Caret /></Line>
            </Large>
          </Body>
          <GroupLabel>Styles</GroupLabel>
        </Group>
        <Group $w={128}>
          <Body $pl={3}>
            <Large $w={40}>
              <LargeIcon><Cells kind="ins" /></LargeIcon>
              <Line>Insert</Line>
              <Line><Caret /></Line>
            </Large>
            <Large $w={40}>
              <LargeIcon><Cells kind="del" /></LargeIcon>
              <Line>Delete</Line>
              <Line><Caret /></Line>
            </Large>
            <Large $w={40}>
              <LargeIcon><FormatCells /></LargeIcon>
              <Line>Format</Line>
              <Line><Caret /></Line>
            </Large>
          </Body>
          <GroupLabel>Cells</GroupLabel>
        </Group>
        <Group $w={175}>
          <Body $pl={6}>
            <SmallCol $w={84}>
              <SmallRow><SmallIcon><Sigma /></SmallIcon><SmallText $w={56}>AutoSum</SmallText><Caret /></SmallRow>
              <SmallRow><SmallIcon><FillDown /></SmallIcon><SmallText>Fill</SmallText><Caret /></SmallRow>
              <SmallRow><SmallIcon><Eraser /></SmallIcon><SmallText>Clear</SmallText><Caret /></SmallRow>
            </SmallCol>
            <Large $w={40}>
              <LargeIcon><SortIcon /></LargeIcon>
              <Line>Sort &amp;</Line>
              <Line>Filter<Caret /></Line>
            </Large>
            <Large $w={40}>
              <LargeIcon><FindIcon /></LargeIcon>
              <Line>Find &amp;</Line>
              <Line>Select<Caret /></Line>
            </Large>
          </Body>
          <GroupLabel>Editing</GroupLabel>
        </Group>
        <CollapseBtn><ChevUp /></CollapseBtn>
      </Ribbon>
      <FormulaRow>
        <FBox $w={94} $ml={5}>A2<Caret /></FBox>
        <Dots />
        <FBox $w={103} $ml={13}>
          <FxSlot $ml={7}><XIcon /></FxSlot>
          <CheckIcon />
          <FxText>fx</FxText>
        </FBox>
        <FBox $ml={4}>
          <FxSlot $ml={3}>40</FxSlot>
          <ChevDown />
        </FBox>
        <FormulaEnd />
      </FormulaRow>
      <Main>
        <SheetWrap>
          <Sheet />
          <Selection><Handle /></Selection>
          <QuickAnalysis><QA /></QuickAnalysis>
          <Pointer><CrossCursor /></Pointer>
        </SheetWrap>
        <VScroll>
          <ScrollBtn><Tri dir="u" /></ScrollBtn>
          <VThumb />
          <Track />
          <ScrollBtn><Tri dir="d" /></ScrollBtn>
        </VScroll>
      </Main>
      <SheetBar>
        <NavArrows><Tri dir="l" c="#c4c4c4" /><Tri dir="r" c="#c4c4c4" /></NavArrows>
        <SheetTab>Sheet1</SheetTab>
        <AddSheet><Plus /></AddSheet>
        <BarDots />
        <HScroll>
          <ScrollBtn><Tri dir="l" /></ScrollBtn>
          <HThumb />
          <Track />
          <ScrollBtn><Tri dir="r" /></ScrollBtn>
        </HScroll>
      </SheetBar>
      <Status>
        <Ready>Ready</Ready>
        <Macro />
        <StatusPush />
        <StatusItem $w={118}>Average: 83.57142857</StatusItem>
        <StatusItem $w={56}>Count: 7</StatusItem>
        <StatusItem $w={61}>Sum: 585</StatusItem>
        <ViewBtn $w={34} $on><ViewNormal /></ViewBtn>
        <ViewBtn $w={37}><ViewPage /></ViewBtn>
        <ViewBtn $w={35}><ViewBreak /></ViewBtn>
        <Zoomer>
          <ZoomMinus />
          <ZoomTrack><ZoomThumb /></ZoomTrack>
          <ZoomPlus />
        </Zoomer>
        <ZoomText>175%</ZoomText>
      </Status>
      <Black />
    </Win>
  );
}
